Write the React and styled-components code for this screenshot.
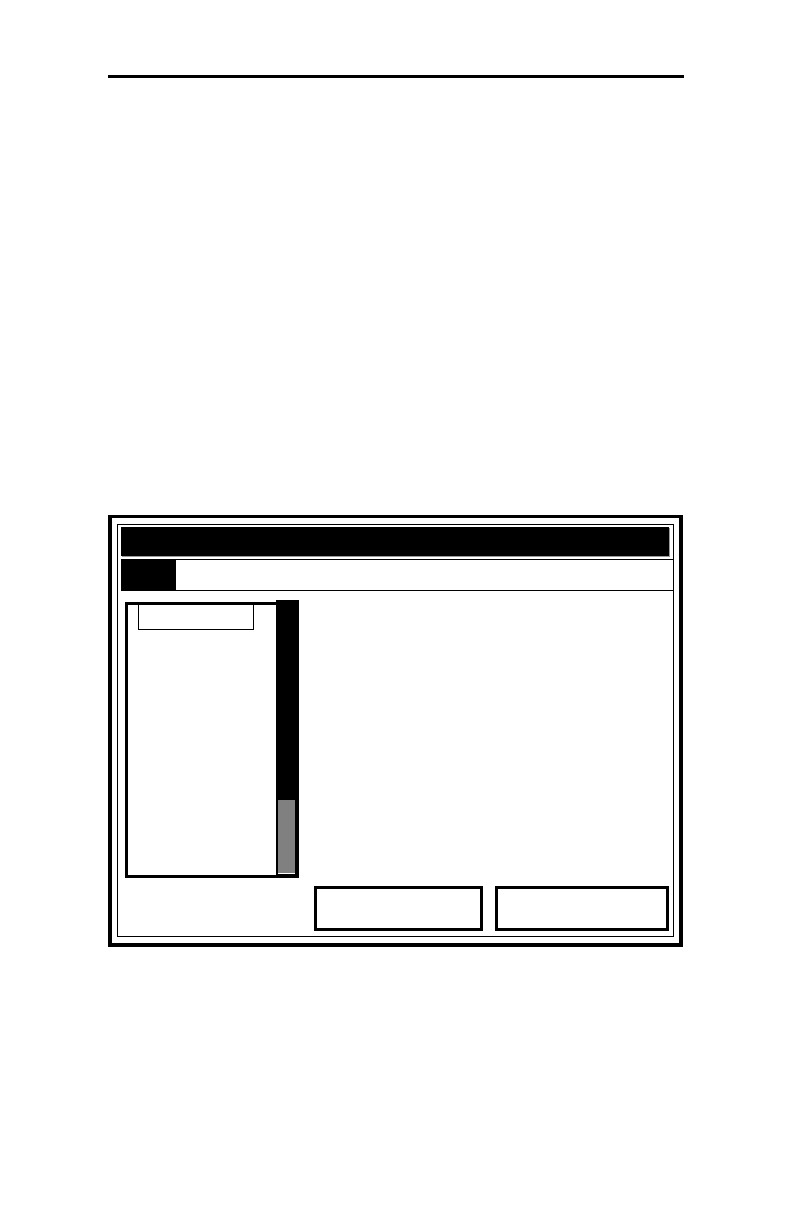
import React from 'react'
import styled, { createGlobalStyle } from 'styled-components'

const GlobalStyle = createGlobalStyle`
    html, body {
        margin: 0;
        padding: 0;
        background: #ffffff;
        font-family: "Liberation Sans", Arial, sans-serif;
    }
`

const Page = styled.div`
    width: 792px;
    min-height: 1224px;
    padding: 75px 0 0 108px;
    box-sizing: border-box;
`

const HeaderRule = styled.div`
    width: 576px;
    height: 3px;
    background: #000;
`

const Screen = styled.div`
    margin-top: 437px;
    width: 575px;
    height: 432px;
    box-sizing: border-box;
    border: 4px solid #000;
    border-top-width: 3px;
    padding: 6px 5px 6px 5px;
`

const Panel = styled.div`
    height: 100%;
    box-sizing: border-box;
    border: 1px solid #000;
    display: flex;
    flex-direction: column;
`

const TitleBar = styled.div`
    margin: 2px 4px 0 3px;
    height: 29px;
    background: #000;
    box-shadow: 1px 1px 0 #9a9a9a;
`

const TabRow = styled.div`
    margin: 3px 0 0 3px;
    height: 32px;
    display: flex;
`

const Tab = styled.div`
    width: 55px;
    background: #000;
`

const TabField = styled.div`
    flex: 1;
    box-sizing: border-box;
    border-top: 1px solid #000;
    border-bottom: 1px solid #000;
`

const Body = styled.div`
    flex: 1;
    display: flex;
    flex-direction: column;
    padding: 9px 4px 0 7px;
`

const ListBox = styled.div`
    display: flex;
    width: 174px;
    height: 278px;
`

const ListArea = styled.div`
    flex: 1;
    margin-top: 2px;
    box-sizing: border-box;
    border: 3px solid #000;
    border-right: none;
    padding-left: 10px;
`

const ListHeader = styled.div`
    width: 116px;
    height: 25px;
    box-sizing: border-box;
    border: 1px solid #000;
    border-top: none;
`

const ScrollTrack = styled.div`
    width: 23px;
    background: #000;
    display: flex;
    flex-direction: column;
    justify-content: flex-end;
    padding: 0 4px 4px 1px;
    box-sizing: border-box;
`

const ScrollThumb = styled.div`
    height: ${p => p.size}px;
    background: #808080;
    border-bottom: 1px solid #fff;
    margin-left: 1px;
`

const ButtonRow = styled.div`
    margin-top: 8px;
    display: flex;
    justify-content: flex-end;
    gap: 12px;
`

const SoftKey = styled.div`
    width: ${p => p.w}px;
    height: 45px;
    box-sizing: border-box;
    border: 3px solid #000;
`

const App = () => {
    return (
        <Page>
            <GlobalStyle />
            <HeaderRule />
            <Screen>
                <Panel>
                    <TitleBar />
                    <TabRow>
                        <Tab />
                        <TabField />
                    </TabRow>
                    <Body>
                        <ListBox>
                            <ListArea>
                                <ListHeader />
                            </ListArea>
                            <ScrollTrack>
                                <ScrollThumb size={73} />
                            </ScrollTrack>
                        </ListBox>
                        <ButtonRow>
                            <SoftKey w={169} />
                            <SoftKey w={174} />
                        </ButtonRow>
                    </Body>
                </Panel>
            </Screen>
        </Page>
    )
}

export default App
